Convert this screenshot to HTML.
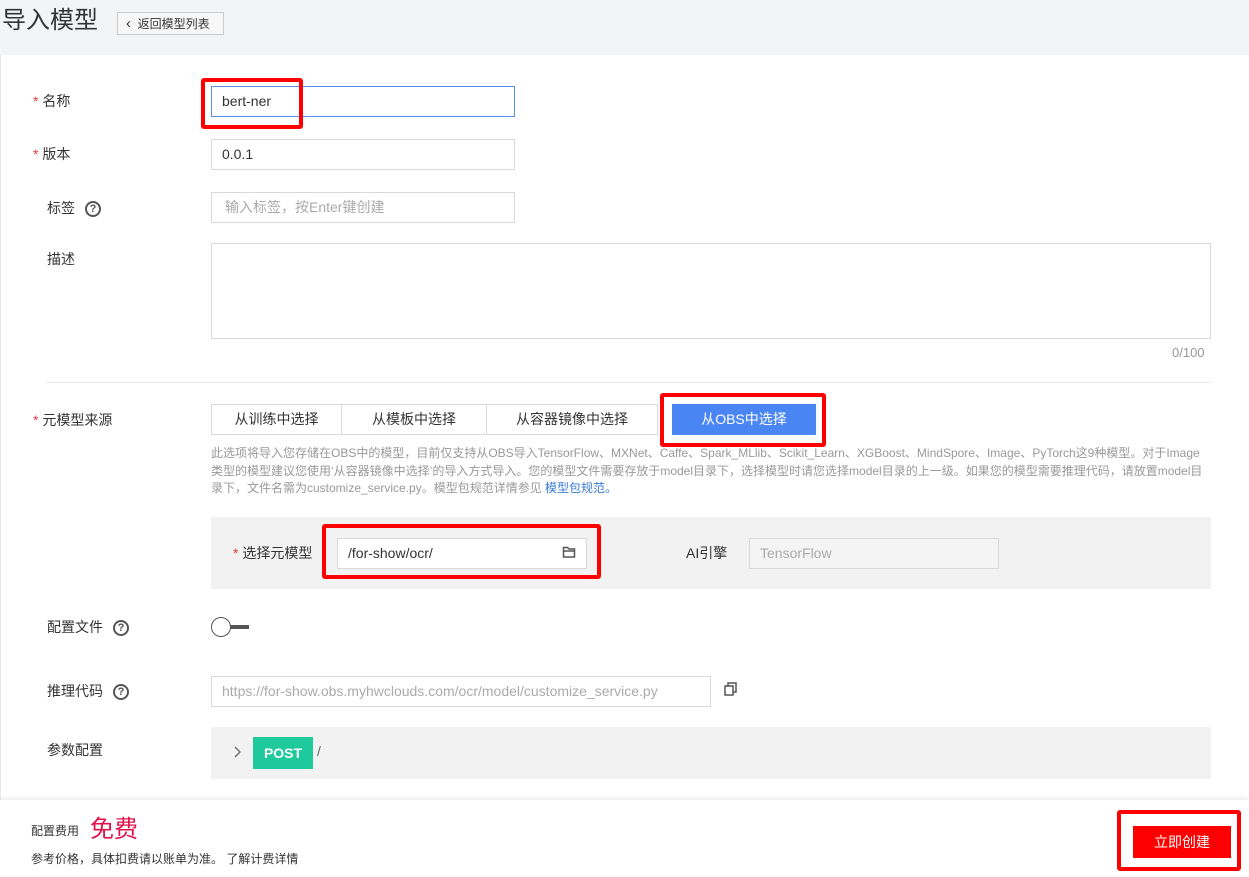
<!DOCTYPE html>
<html><head><meta charset="utf-8"><style>
*{box-sizing:border-box;margin:0;padding:0}
body{width:1249px;height:877px;position:relative;overflow:hidden;background:#fff;font-family:"Liberation Sans","Noto Sans CJK SC",sans-serif;color:#333;font-size:14px}
.a{position:absolute}
.hdr{left:0;top:0;width:1249px;height:55px;background:#f3f4f6}
.lbl{font-size:14px;color:#333;line-height:20px}
.st{color:#e4393c;font-size:14px}
.in{border:1px solid #d9d9d9;background:#fff;font-size:14px;line-height:28px;padding-left:10px;color:#333}
.ph{color:#aaa}
.q{display:inline-block;width:16px;height:16px;border:2px solid #555;border-radius:50%;font-size:11px;line-height:12px;text-align:center;font-weight:bold;color:#555;vertical-align:middle;margin-left:10px}
.rb{border:4px solid #f00;border-radius:3px}
.tab{top:404px;height:31px;border:1px solid #d9d9d9;font-size:14px;text-align:center;line-height:29px;color:#333;background:#fff}
.d{font-size:12px;color:#999;line-height:17.5px}
</style></head><body>
<div class="a hdr"></div>
<div class="a" style="left:2px;top:5px;font-size:24px;color:#333;line-height:32px">导入模型</div>
<div class="a" style="left:117px;top:12px;width:107px;height:23px;border:1px solid #ccc;background:#f7f7f7;font-size:12px;line-height:21px;padding-left:8px;color:#333"><span style="font-size:15px">&#8249;</span>&nbsp; 返回模型列表</div>
<div class="a" style="left:0;top:55px;width:1px;height:745px;background:#e8e8e8"></div>

<div class="a lbl" style="left:33px;top:91px"><span class="st">* </span>名称</div>
<div class="a in" style="left:211px;top:86px;width:304px;height:31px;border-color:#5b8ee6">bert-ner</div>
<div class="a rb" style="left:201px;top:78px;width:102px;height:51px"></div>

<div class="a lbl" style="left:33px;top:144px"><span class="st">* </span>版本</div>
<div class="a in" style="left:211px;top:139px;width:304px;height:31px">0.0.1</div>

<div class="a lbl" style="left:47px;top:198px">标签<span class="q">?</span></div>
<div class="a in ph" style="left:211px;top:192px;width:304px;height:31px;padding-left:13px">输入标签，按Enter键创建</div>

<div class="a lbl" style="left:47px;top:249px">描述</div>
<div class="a in" style="left:211px;top:243px;width:1000px;height:96px"></div>
<div class="a" style="left:1172px;top:345px;font-size:13px;color:#999">0/100</div>
<div class="a" style="left:47px;top:382px;width:1164px;height:1px;background:#e8e8e8"></div>

<div class="a lbl" style="left:33px;top:410px"><span class="st">* </span>元模型来源</div>
<div class="a tab" style="left:211px;width:131px">从训练中选择</div>
<div class="a tab" style="left:341px;width:146px">从模板中选择</div>
<div class="a tab" style="left:486px;width:172px">从容器镜像中选择</div>
<div class="a tab" style="left:672px;width:144px;background:#4a86f3;border-color:#4a86f3;color:#fff">从OBS中选择</div>
<div class="a rb" style="left:660px;top:393px;width:166px;height:54px"></div>
<div class="a d" style="left:211px;top:445px;width:1000px">此选项将导入您存储在OBS中的模型，目前仅支持从OBS导入TensorFlow、MXNet、Caffe、Spark_MLlib、Scikit_Learn、XGBoost、MindSpore、Image、PyTorch这9种模型。对于Image类型的模型建议您使用‘从容器镜像中选择’的导入方式导入。您的模型文件需要存放于model目录下，选择模型时请您选择model目录的上一级。如果您的模型需要推理代码，请放置model目录下，文件名需为customize_service.py。模型包规范详情参见 <span style="color:#3a7bd5">模型包规范。</span></div>

<div class="a" style="left:211px;top:517px;width:1000px;height:72px;background:#f2f2f2"></div>
<div class="a lbl" style="left:233px;top:543px"><span class="st">* </span>选择元模型</div>
<div class="a in" style="left:337px;top:538px;width:250px;height:31px">/for-show/ocr/</div>
<svg class="a" style="left:562px;top:545px" width="14" height="14" viewBox="0 0 14 14"><path d="M1.5 2.5h4l1.5 1.5h5.5v8h-11z M1.5 6h11" fill="none" stroke="#555" stroke-width="1.5"/></svg>
<div class="a rb" style="left:322px;top:524px;width:279px;height:55px"></div>
<div class="a lbl" style="left:686px;top:543px">AI引擎</div>
<div class="a in ph" style="left:749px;top:538px;width:250px;height:31px;background:#f4f4f4">TensorFlow</div>

<div class="a lbl" style="left:47px;top:617px">配置文件<span class="q">?</span></div>
<div class="a" style="left:228px;top:625px;width:21px;height:4px;background:#555"></div>
<div class="a" style="left:211px;top:617px;width:20px;height:20px;border:1.5px solid #555;border-radius:50%;background:#fff"></div>

<div class="a lbl" style="left:47px;top:681px">推理代码<span class="q">?</span></div>
<div class="a in ph" style="left:211px;top:676px;width:500px;height:31px">https://for-show.obs.myhwclouds.com/ocr/model/customize_service.py</div>
<svg class="a" style="left:723px;top:681px" width="16" height="16" viewBox="0 0 16 16"><rect x="2" y="5" width="8" height="9" fill="none" stroke="#555" stroke-width="1.5"/><path d="M5 5V2h8v9h-3" fill="none" stroke="#555" stroke-width="1.5"/></svg>

<div class="a lbl" style="left:47px;top:740px">参数配置</div>
<div class="a" style="left:211px;top:727px;width:1000px;height:52px;background:#f2f2f2"></div>
<svg class="a" style="left:233px;top:746px" width="8" height="12" viewBox="0 0 8 12"><path d="M2 1l5 5-5 5" fill="none" stroke="#666" stroke-width="1.3"/></svg>
<div class="a" style="left:253px;top:737px;width:60px;height:32px;background:#1ec99b;color:#fff;font-size:14px;font-weight:bold;text-align:center;line-height:32px">POST</div>
<div class="a" style="left:317px;top:743px;color:#666">/</div>

<div class="a" style="left:0;top:800px;width:1249px;height:77px;background:#fff;box-shadow:0 -2px 4px rgba(0,0,0,0.08)"></div>
<div class="a" style="left:31px;top:822px;font-size:12px;color:#333">配置费用</div>
<div class="a" style="left:90px;top:814px;font-size:24px;color:#e0134c;line-height:32px">免费</div>
<div class="a" style="left:31px;top:850px;font-size:12px;color:#333">参考价格，具体扣费请以账单为准。 了解计费详情</div>
<div class="a" style="left:1133px;top:826px;width:98px;height:32px;background:#f00;color:#fff;font-size:14px;text-align:center;line-height:32px">立即创建</div>
<div class="a rb" style="left:1117px;top:810px;width:124px;height:61px"></div>
</body></html>
